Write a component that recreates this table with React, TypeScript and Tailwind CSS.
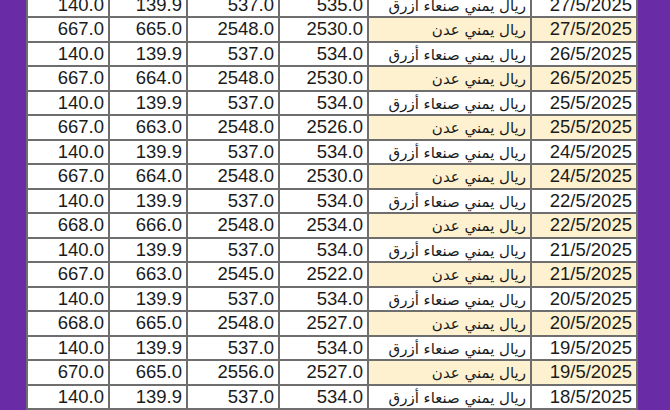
import React from 'react'

type Row = {
  date: string
  aden: boolean
  v: [string, string, string, string]
}

const rows: Row[] = [
  { date: '27/5/2025', aden: false, v: ['140.0', '139.9', '537.0', '535.0'] },
  { date: '27/5/2025', aden: true, v: ['667.0', '665.0', '2548.0', '2530.0'] },
  { date: '26/5/2025', aden: false, v: ['140.0', '139.9', '537.0', '534.0'] },
  { date: '26/5/2025', aden: true, v: ['667.0', '664.0', '2548.0', '2530.0'] },
  { date: '25/5/2025', aden: false, v: ['140.0', '139.9', '537.0', '534.0'] },
  { date: '25/5/2025', aden: true, v: ['667.0', '663.0', '2548.0', '2526.0'] },
  { date: '24/5/2025', aden: false, v: ['140.0', '139.9', '537.0', '534.0'] },
  { date: '24/5/2025', aden: true, v: ['667.0', '664.0', '2548.0', '2530.0'] },
  { date: '22/5/2025', aden: false, v: ['140.0', '139.9', '537.0', '534.0'] },
  { date: '22/5/2025', aden: true, v: ['668.0', '666.0', '2548.0', '2534.0'] },
  { date: '21/5/2025', aden: false, v: ['140.0', '139.9', '537.0', '534.0'] },
  { date: '21/5/2025', aden: true, v: ['667.0', '663.0', '2545.0', '2522.0'] },
  { date: '20/5/2025', aden: false, v: ['140.0', '139.9', '537.0', '534.0'] },
  { date: '20/5/2025', aden: true, v: ['668.0', '665.0', '2548.0', '2527.0'] },
  { date: '19/5/2025', aden: false, v: ['140.0', '139.9', '537.0', '534.0'] },
  { date: '19/5/2025', aden: true, v: ['670.0', '665.0', '2556.0', '2527.0'] },
  { date: '18/5/2025', aden: false, v: ['140.0', '139.9', '537.0', '534.0'] },
]

const cell =
  'border-2 border-[#6e6e6e] h-[24.5px] p-0 pr-[4px] text-right leading-none align-middle whitespace-nowrap overflow-hidden'

export default function App() {
  return (
    <div className="w-[670px] h-[410px] overflow-hidden bg-[#6a2ba6] pl-[26px]">
      <table
        className="table-fixed border-collapse bg-white text-[#1b1b1b] text-[18.5px] mt-[-8.5px]"
        style={{ fontFamily: '"Liberation Sans", "DejaVu Sans", Arial, sans-serif' }}
      >
        <colgroup>
          <col className="w-[82px]" />
          <col className="w-[78px]" />
          <col className="w-[92px]" />
          <col className="w-[89px]" />
          <col className="w-[163px]" />
          <col className="w-[106px]" />
        </colgroup>
        <tbody>
          {rows.map((r, i) => (
            <tr key={i} className="h-[24.5px]">
              {r.v.map((n, j) => (
                <td key={j} className={cell}>
                  {n}
                </td>
              ))}
              <td className={`${cell} ${r.aden ? 'bg-[#fdf1cf]' : ''}`}>
                <span dir="rtl" className="text-[15px] font-['DejaVu_Sans',sans-serif]">
                  {r.aden ? 'ريال يمني عدن' : 'ريال يمني صنعاء أزرق'}
                </span>
              </td>
              <td className={`${cell} ${r.aden ? 'bg-[#fdf1cf]' : ''}`}>{r.date}</td>
            </tr>
          ))}
        </tbody>
      </table>
    </div>
  )
}
